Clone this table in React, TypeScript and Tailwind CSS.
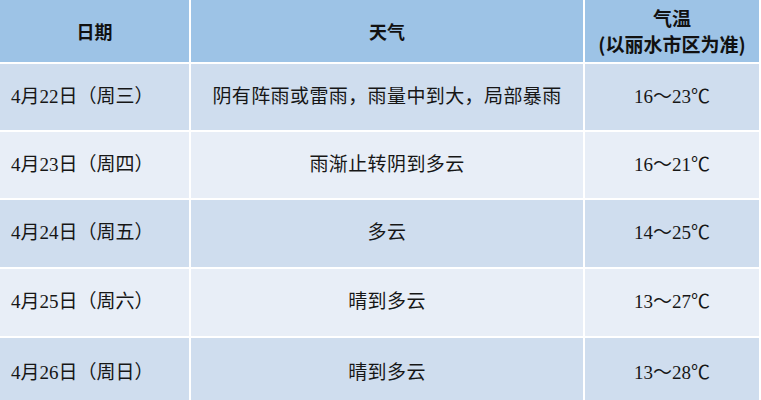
import React from 'react';

const rows = [
  { date: '4月22日（周三）', weather: '阴有阵雨或雷雨，雨量中到大，局部暴雨', temp: '16～23℃', h: 'h-[66px]', bg: 'bg-[#cfddee]' },
  { date: '4月23日（周四）', weather: '雨渐止转阴到多云', temp: '16～21℃', h: 'h-[66px]', bg: 'bg-[#e8eef7]' },
  { date: '4月24日（周五）', weather: '多云', temp: '14～25℃', h: 'h-[67px]', bg: 'bg-[#cfddee]' },
  { date: '4月25日（周六）', weather: '晴到多云', temp: '13～27℃', h: 'h-[67px]', bg: 'bg-[#e8eef7]' },
  { date: '4月26日（周日）', weather: '晴到多云', temp: '13～28℃', h: 'h-[70px]', bg: 'bg-[#cfddee]' },
];

const bodyFont = "font-['Liberation_Serif','Noto_Sans_CJK_SC',serif]";
const headFont = "font-['Noto_Sans_CJK_SC',sans-serif]";

export default function App() {
  return (
    <div className="w-[761px] h-[400px] overflow-hidden bg-white">
      <div className="w-[757px] grid grid-cols-[189px_392px_174px] gap-[2px] bg-white">
        {/* header */}
        <div className={`h-[62px] bg-[#9dc3e6] flex items-center justify-center text-[18px] font-bold text-[#111] ${headFont}`}>日期</div>
        <div className={`h-[62px] bg-[#9dc3e6] flex items-center justify-center text-[18px] font-bold text-[#111] ${headFont}`}>天气</div>
        <div className={`h-[62px] bg-[#9dc3e6] flex flex-col items-center justify-center text-[19px] leading-[26px] font-bold text-[#111] ${headFont}`}>
          <span>气温</span>
          <span>(以丽水市区为准)</span>
        </div>

        {rows.map((r) => (
          <React.Fragment key={r.date}>
            <div className={`${r.h} ${r.bg} flex items-center pl-[11px] text-[19px] text-[#161616] ${bodyFont}`}>{r.date}</div>
            <div className={`${r.h} ${r.bg} flex items-center justify-center text-[19px] tracking-[0.4px] text-[#161616] ${bodyFont}`}>{r.weather}</div>
            <div className={`${r.h} ${r.bg} flex items-center justify-center text-[19px] text-[#161616] ${bodyFont}`}>{r.temp}</div>
          </React.Fragment>
        ))}
      </div>
    </div>
  );
}
